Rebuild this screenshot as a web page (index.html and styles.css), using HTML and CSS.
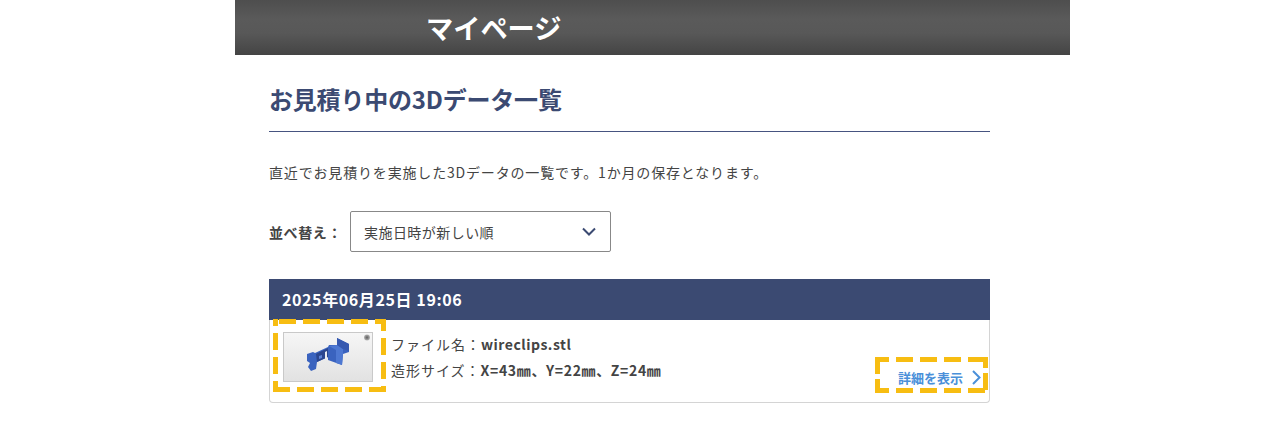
FILE: index.html
```html
<!DOCTYPE html>
<html lang="ja">
<head>
    <meta charset="UTF-8">
    <title>マイページ</title>
    <link rel="stylesheet" href="styles.css">
</head>
<body>
    <div class="page">
        <!-- ページタイトル -->
        <header class="page-header">
            <div class="page-title">マイページ</div>
        </header>

        <main class="content">
            <h1 class="section-title">お見積り中の3Dデータ一覧</h1>
            <p class="lead">直近でお見積りを実施した3Dデータの一覧です。1か月の保存となります。</p>

            <div class="sort">
                <span class="sort-label">並べ替え：</span>
                <div class="sort-select">
                    <span>実施日時が新しい順</span>
                    <svg class="sort-arrow" width="16" height="10" viewBox="0 0 16 10"><path d="M2 1.5 L8 7.5 L14 1.5" fill="none" stroke="#3b4a72" stroke-width="2"/></svg>
                </div>
            </div>

            <!-- 見積りカード -->
            <section class="quote">
                <div class="quote-date">2025年06月25日 19:06</div>
                <div class="quote-body">
                    <div class="dashed thumb-mark">
                        <div class="thumb">
                            <svg width="88" height="48" viewBox="1 1 88 48">
                                <defs>
                                    <radialGradient id="dot"><stop offset="0" stop-color="#5c5c5c"/><stop offset="1" stop-color="#b5b5b5"/></radialGradient>
                                </defs>
                                <g class="part">
                                    <path d="M24 22 L30 20 L32 21 L45 15 L46 13 L54 13 L54 6 L66 12 L66 20 L60 22 L59 33 L45 28 L45 25 L34 30 L33 37 L28 39 L25 35 L27 31 L24 29 Z" fill="#3a63bf"/>
                                    <path d="M33 22 L45 16 L45 25 L34 30 Z" fill="#2b468f"/>
                                    <path d="M46 14 L54 13 L60 17 L60 22 L59 33 L53 31 L53 18 Z" fill="#4e78d2"/>
                                    <path d="M54 6 L66 12 L66 19 L60 17 L54 13 Z" fill="#3558b0"/>
                                    <path d="M42 20 L44 19 L44 27 L42 28 Z" fill="#e9ecf3"/>
                                    <path d="M36 24 L39 23 L39 26 L36 27 Z" fill="#5d83d8"/>
                                </g>
                                <circle cx="84" cy="5.5" r="3" fill="url(#dot)"/>
                            </svg>
                        </div>
                    </div>
                    <div class="file-info">
                        <div class="file-row">ファイル名：<b>wireclips.stl</b></div>
                        <div class="file-row">造形サイズ：<b class="size">X=43㎜、Y=22㎜、Z=24㎜</b></div>
                    </div>
                    <a class="dashed detail-link">
                        <span>詳細を表示</span>
                        <svg width="9" height="15" viewBox="0 0 9 15"><path d="M1 1 L7.5 7.5 L1 14" fill="none" stroke="#4a90d9" stroke-width="2"/></svg>
                    </a>
                </div>
            </section>
        </main>
    </div>
</body>
</html>
```

FILE: styles.css
```css
/* General Styles */
body {
    margin: 0;
    background: #fff;
    font-family: "Noto Sans CJK JP", "Noto Sans", sans-serif;
    color: #444;
}

.page {
    width: 835px;
    margin-left: 235px;
}

/* ヘッダー */
.page-header {
    height: 55px;
    box-sizing: border-box;
    padding-left: 191px;
    display: flex;
    align-items: center;
    background: linear-gradient(#4e4e4e, #5a5a5a 35%, #585858 60%, #444);
}

.page-title {
    color: #fff;
    font-size: 27.2px;
    font-weight: 700;
    line-height: 1;
}

.content {
    width: 721px;
    padding-left: 34px;
}

.section-title {
    margin: 0;
    padding: 26px 0 14px;
    height: 36px;
    line-height: 36px;
    font-size: 24px;
    font-weight: 700;
    letter-spacing: -0.2px;
    color: #3b4a72;
    border-bottom: 1px solid #465480;
}

.lead {
    margin: 29px 0 0;
    font-size: 14px;
    line-height: 22px;
    letter-spacing: 0.83px;
}

/* 並べ替え */
.sort {
    margin-top: 28px;
    display: flex;
    align-items: center;
    gap: 8px;
}

.sort-label {
    font-size: 14px;
    font-weight: 700;
    width: 73px;
    letter-spacing: 0.6px;
    white-space: nowrap;
}

.sort-select {
    width: 261px;
    height: 41px;
    box-sizing: border-box;
    padding: 0 13px;
    display: flex;
    align-items: center;
    justify-content: space-between;
    border: 1px solid #888;
    border-radius: 2px;
    font-size: 14px;
    letter-spacing: 0.45px;
}

/* カード */
.quote {
    margin-top: 27px;
}

.quote-date {
    height: 41px;
    line-height: 41px;
    padding-left: 13px;
    background: #3b4a72;
    color: #fff;
    font-size: 16px;
    font-weight: 700;
    letter-spacing: 0.6px;
}

.quote-body {
    height: 83px;
    box-sizing: border-box;
    display: flex;
    border: 1px solid #d4d4d4;
    border-top: 0;
    border-radius: 0 0 4px 4px;
    position: relative;
}

/* 破線の枠（注釈） */
.dashed {
    box-sizing: border-box;
    background-image:
        linear-gradient(90deg, #f7bd12 17px, transparent 17px),
        linear-gradient(90deg, #f7bd12 17px, transparent 17px),
        linear-gradient(#f7bd12 17px, transparent 17px),
        linear-gradient(#f7bd12 17px, transparent 17px);
    background-size: 24px 5px, 24px 5px, 5px 24px, 5px 24px;
    background-repeat: repeat-x, repeat-x, repeat-y, repeat-y;
}

.thumb-mark {
    width: 113px;
    height: 73px;
    margin: -1px 0 0 3px;
    padding: 13px 0 0 10px;
    flex-shrink: 0;
    background-position: 6px 0, 0 100%, 0 -10px, 100% -5px;
}

.thumb {
    width: 90px;
    height: 50px;
    box-sizing: border-box;
    border: 1px solid #c9c9c9;
    background: linear-gradient(#f6f6f6, #e2e2e2);
}

.thumb svg {
    display: block;
}

.part {
    filter: blur(0.4px);
}

.file-info {
    margin: 11px 0 0 5px;
    font-size: 14px;
    line-height: 26px;
    letter-spacing: 1px;
}

.file-row b {
    font-weight: 700;
    letter-spacing: 0.5px;
}

.file-row .size {
    letter-spacing: 0.65px;
}

.detail-link {
    position: absolute;
    right: 1px;
    bottom: 9px;
    width: 113px;
    height: 36px;
    padding: 4px 0 0 23px;
    display: flex;
    align-items: center;
    gap: 9px;
    color: #4a90d9;
    font-size: 13px;
    font-weight: 700;
    background-size: 24px 5px, 24px 5px, 5px 22px, 5px 22px;
    background-position: -3px 0, -3px 100%, 0 0, 100% -6px;
}
```
